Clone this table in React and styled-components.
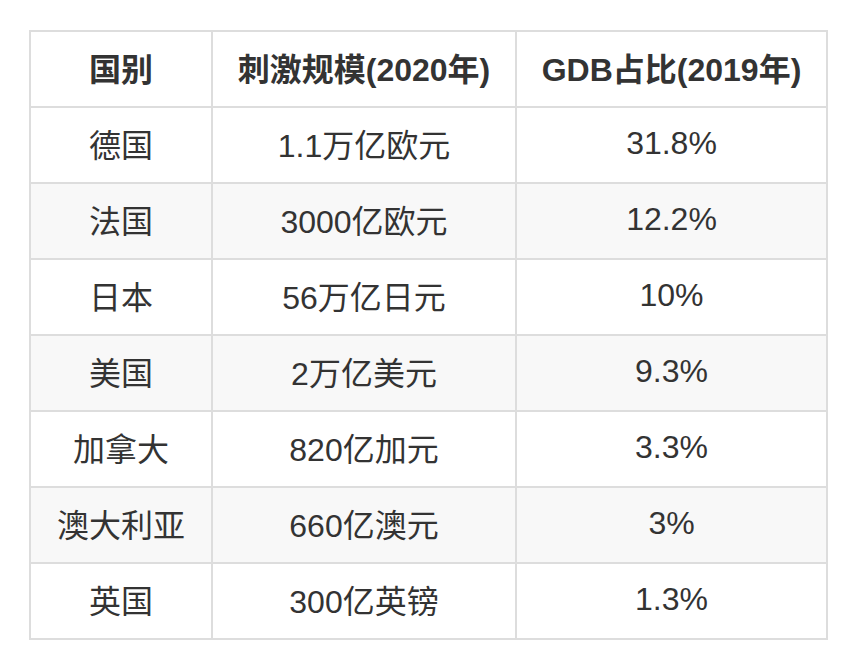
import React from "react"
import styled, { createGlobalStyle } from "styled-components"

const GlobalStyle = createGlobalStyle`
  html, body {
    margin: 0;
    padding: 0;
    background: #fff;
  }
  body {
    font-family: "Liberation Sans", "Noto Sans CJK SC", sans-serif;
    color: #333;
  }
`

const Page = styled.div`
  padding: 30px 29px;
`

const Table = styled.table`
  width: 797px;
  table-layout: fixed;
  border-collapse: collapse;
  border: 2px solid #ddd;
  font-size: 32px;
`

const Th = styled.th`
  height: 70px;
  padding: 0 8px 4px;
  border: 2px solid #ddd;
  font-weight: bold;
  text-align: center;
  vertical-align: middle;
`

const Tr = styled.tr`
  background: ${(p) => (p.$striped ? "#f8f8f8" : "#fff")};
`

const Td = styled.td`
  height: 70px;
  padding: 0 8px 4px;
  border: 2px solid #ddd;
  text-align: center;
  vertical-align: middle;
`

const rows = [
  ["德国", "1.1万亿欧元", "31.8%"],
  ["法国", "3000亿欧元", "12.2%"],
  ["日本", "56万亿日元", "10%"],
  ["美国", "2万亿美元", "9.3%"],
  ["加拿大", "820亿加元", "3.3%"],
  ["澳大利亚", "660亿澳元", "3%"],
  ["英国", "300亿英镑", "1.3%"],
]

export default function App() {
  return (
    <Page>
      <GlobalStyle />
      <Table>
        <colgroup>
          <col style={{ width: 182 }} />
          <col style={{ width: 304 }} />
          <col style={{ width: 311 }} />
        </colgroup>
        <thead>
          <tr>
            <Th>国别</Th>
            <Th>刺激规模(2020年)</Th>
            <Th>GDB占比(2019年)</Th>
          </tr>
        </thead>
        <tbody>
          {rows.map((r, i) => (
            <Tr key={r[0]} $striped={i % 2 === 1}>
              <Td>{r[0]}</Td>
              <Td>{r[1]}</Td>
              <Td>{r[2]}</Td>
            </Tr>
          ))}
        </tbody>
      </Table>
    </Page>
  )
}
